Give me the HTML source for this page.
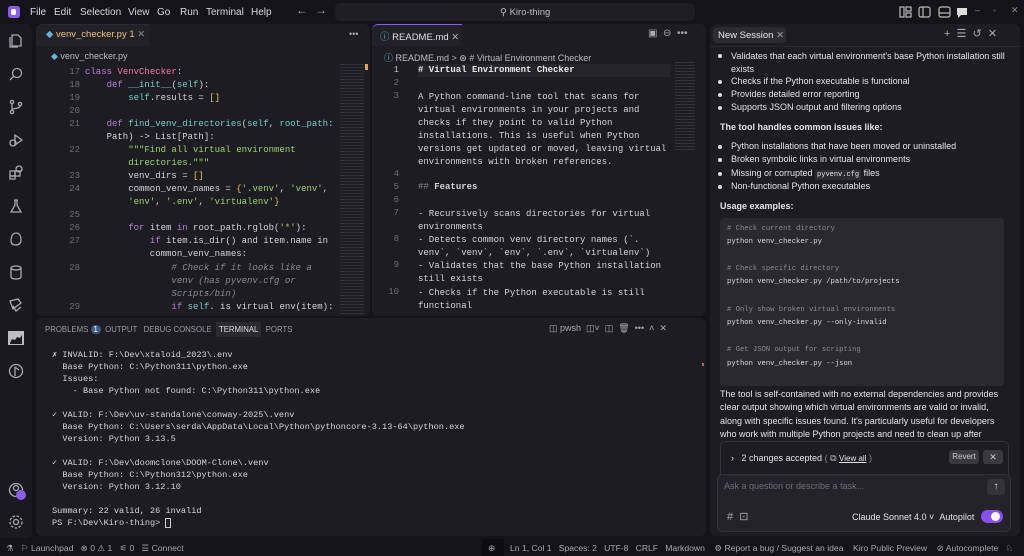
<!DOCTYPE html>
<html><head><meta charset="utf-8">
<style>
*{margin:0;padding:0;box-sizing:border-box}
body{width:1024px;height:556px;overflow:hidden;background:#141318;font-family:"Liberation Sans",sans-serif;color:#cfcfd4;position:relative}
.a{position:absolute}
.mono{font-family:"Liberation Mono","DejaVu Sans Mono",monospace}
.panel{position:absolute;background:#1d1c22;border-radius:6px}
.mi{position:absolute;top:7px;font-size:10px;color:#d8d8dc}
.ln{position:absolute;font-size:9px;color:#6c6c74;text-align:right;width:22px}
.cl{position:absolute;font-size:9px;white-space:pre;color:#d4d4d4}
.k{color:#b77fdc}.c{color:#f2769d}.f{color:#6fd0c6}.s{color:#9bd36b}.b{color:#e8c25a}.cm{color:#8a8a90;font-style:italic}.sf{color:#6fd0c6}
.t{position:absolute;font-size:8.6px;white-space:pre;color:#d6d6d6;left:52px}
.ch{position:absolute;font-size:9px;color:#e4e4e8;white-space:nowrap}
.bul{position:absolute;left:718px;width:4px;height:4px;border-radius:2px;background:#ddd}
.cb{position:absolute;left:727px;font-size:7.2px;white-space:pre}
.sb{position:absolute;top:543px;font-size:8.6px;color:#a8a8b0;white-space:nowrap}
.ic{position:absolute;stroke:#a9a9b2;fill:none;stroke-width:1.3}
</style></head><body>

<!-- title bar -->
<div class="a" style="left:8px;top:6px;width:12px;height:12px;border-radius:3px;background:#8a5cf0"></div>
<div class="a" style="left:11px;top:9px;width:5px;height:6px;border-radius:2px;background:#fff"></div>
<div class="mi" style="left:30px">File</div><div class="mi" style="left:54px">Edit</div><div class="mi" style="left:80px">Selection</div><div class="mi" style="left:128px">View</div><div class="mi" style="left:157px">Go</div><div class="mi" style="left:180px">Run</div><div class="mi" style="left:206px">Terminal</div><div class="mi" style="left:251px">Help</div>
<div class="a" style="left:296px;top:3px;font-size:12px;color:#aaa">←</div>
<div class="a" style="left:315px;top:3px;font-size:12px;color:#aaa">→</div>
<div class="a" style="left:335px;top:3px;width:360px;height:18px;background:#1f1e24;border-radius:5px"></div>
<div class="a" style="left:500px;top:7px;font-size:9.5px;color:#bbb">⚲ Kiro-thing</div>
<svg class="a" style="left:899px;top:5px" width="70" height="14" viewBox="0 0 70 14"><g stroke="#bbb" fill="none" stroke-width="1.2"><rect x="1" y="2" width="4" height="10"/><rect x="7" y="2" width="5" height="4"/><rect x="7" y="8" width="5" height="4"/><rect x="20" y="2" width="11" height="10" rx="2"/><line x1="24" y1="2" x2="24" y2="12"/><rect x="40" y="2" width="11" height="10" rx="2"/><line x1="40" y1="8" x2="51" y2="8"/></g><path d="M58 3h10v7h-6l-3 3v-3h-1z" fill="#ddd"/></svg>
<div class="a" style="left:975px;top:5px;font-size:9px;color:#888">–</div>
<div class="a" style="left:993px;top:6px;font-size:8px;color:#888">▫</div>
<div class="a" style="left:1011px;top:5px;font-size:9px;color:#888">✕</div>

<!-- activity bar -->
<div class="a" style="left:0;top:24px;width:32px;height:514px;background:#1a191e;border-radius:0 6px 6px 0"></div>
<svg class="ic" style="left:8px;top:32px" width="16" height="16"><path d="M4 3h6l3 3v8H4z M2 5v10h8"/></svg>
<svg class="ic" style="left:8px;top:66px" width="16" height="16"><circle cx="9" cy="7" r="4.5"/><path d="M6 10l-4 4"/></svg>
<svg class="ic" style="left:8px;top:99px" width="16" height="16"><circle cx="4" cy="3" r="1.6"/><circle cx="4" cy="13" r="1.6"/><circle cx="12" cy="5" r="1.6"/><path d="M4 5v6M12 7c0 3-8 2-8 4"/></svg>
<svg class="ic" style="left:8px;top:132px" width="16" height="16"><path d="M7 3l7 5-7 5z"/><circle cx="5" cy="11" r="3"/></svg>
<svg class="ic" style="left:8px;top:165px" width="16" height="16"><rect x="2" y="6" width="5" height="5"/><rect x="7" y="6" width="5" height="5"/><rect x="2" y="11" width="5" height="3"/><circle cx="11" cy="4" r="3"/></svg>
<svg class="ic" style="left:8px;top:198px" width="16" height="16"><path d="M6 2h4M7 2v5l-4 7h10l-4-7V2"/></svg>
<svg class="ic" style="left:8px;top:231px" width="16" height="16"><path d="M8 2c4 0 5 4 5 7s-2 5-5 5-5-1-5-4 1-8 5-8z"/></svg>
<svg class="ic" style="left:8px;top:264px" width="16" height="16"><ellipse cx="8" cy="4" rx="5" ry="2"/><path d="M3 4v9c0 1 2 2 5 2s5-1 5-2V4"/></svg>
<svg class="ic" style="left:8px;top:297px" width="16" height="16"><path d="M2 4l8-2 3 4-8 6zM5 9l3 5 5-4"/></svg>
<svg class="a" style="left:8px;top:331px" width="16" height="14"><rect width="16" height="14" fill="#bdbdc4"/><path d="M2 12l2-4 3 1 2-3 3 1 2-3v9H2z" fill="#1a191e"/></svg>
<svg class="ic" style="left:8px;top:363px" width="16" height="16"><circle cx="8" cy="8" r="6.5"/><path d="M7 4v9M7 4l4 3"/></svg>
<svg class="ic" style="left:8px;top:482px" width="16" height="16"><circle cx="8" cy="8" r="6.5"/><circle cx="8" cy="6" r="2.5"/></svg>
<div class="a" style="left:16px;top:490px;width:10px;height:10px;border-radius:5px;background:#8a5cf0"></div>
<svg class="ic" style="left:8px;top:514px" width="16" height="16"><circle cx="8" cy="8" r="2.5"/><circle cx="8" cy="8" r="6" stroke-dasharray="2.5 1.6"/></svg>

<!-- left editor -->
<div class="panel" style="left:36px;top:24px;width:334px;height:292px"></div>
<div class="a" style="left:36px;top:24px;width:113px;height:22px;background:#222127;border-radius:6px 0 0 0;border-top:1px solid #2a2930"></div>
<div class="a" style="left:46px;top:29px;font-size:9.5px;color:#e8c470"><span style="color:#5fb7d6">◆</span> venv_checker.py 1 <span style="color:#888">✕</span></div>
<div class="a" style="left:349px;top:29px;font-size:9px;color:#aaa">•••</div>
<div class="a" style="left:51px;top:51px;font-size:9px;color:#bbb"><span style="color:#5fb7d6">◆</span> venv_checker.py</div>
<div class="a" style="left:340px;top:64px;width:24px;height:250px;opacity:.35;background:repeating-linear-gradient(#555 0 1px,transparent 1px 3px)"></div>
<div class="a" style="left:365px;top:64px;width:3px;height:6px;background:#e8a23e"></div>

<div class="ln mono" style="left:58px;top:67px">17</div><div class="cl mono" style="left:85px;top:67px"><span class="k">class</span> <span class="c">VenvChecker</span>:</div>
<div class="ln mono" style="left:58px;top:80px">18</div><div class="cl mono" style="left:85px;top:80px">    <span class="k">def</span> <span class="f">__init__</span>(<span class="sf">self</span>):</div>
<div class="ln mono" style="left:58px;top:93px">19</div><div class="cl mono" style="left:85px;top:93px">        <span class="sf">self</span>.results = <span class="b">[]</span></div>
<div class="ln mono" style="left:58px;top:106px">20</div>
<div class="ln mono" style="left:58px;top:119px">21</div><div class="cl mono" style="left:85px;top:119px">    <span class="k">def</span> <span class="f">find_venv_directories</span>(<span class="sf">self</span>, <span class="f">root_path</span>:</div>
<div class="cl mono" style="left:85px;top:132px">    Path) -> List[Path]:</div>
<div class="ln mono" style="left:58px;top:145px">22</div><div class="cl mono s" style="left:85px;top:145px">        """Find all virtual environment</div>
<div class="cl mono s" style="left:85px;top:158px">        directories."""</div>
<div class="ln mono" style="left:58px;top:171px">23</div><div class="cl mono" style="left:85px;top:171px">        venv_dirs = <span class="b">[]</span></div>
<div class="ln mono" style="left:58px;top:184px">24</div><div class="cl mono" style="left:85px;top:184px">        common_venv_names = <span class="b">{</span><span class="s">'.venv'</span>, <span class="s">'venv'</span>,</div>
<div class="cl mono" style="left:85px;top:197px">        <span class="s">'env'</span>, <span class="s">'.env'</span>, <span class="s">'virtualenv'</span><span class="b">}</span></div>
<div class="ln mono" style="left:58px;top:210px">25</div>
<div class="ln mono" style="left:58px;top:223px">26</div><div class="cl mono" style="left:85px;top:223px">        <span class="k">for</span> item <span class="k">in</span> root_path.rglob(<span class="s">'*'</span>):</div>
<div class="ln mono" style="left:58px;top:236px">27</div><div class="cl mono" style="left:85px;top:236px">            <span class="k">if</span> item.is_dir() and item.name in</div>
<div class="cl mono" style="left:85px;top:249px">            common_venv_names:</div>
<div class="ln mono" style="left:58px;top:263px">28</div><div class="cl mono cm" style="left:85px;top:263px">                # Check if it looks like a</div>
<div class="cl mono cm" style="left:85px;top:276px">                venv (has pyvenv.cfg or</div>
<div class="cl mono cm" style="left:85px;top:289px">                Scripts/bin)</div>
<div class="ln mono" style="left:58px;top:302px">29</div><div class="cl mono" style="left:85px;top:302px">                <span class="k">if</span> <span class="sf">self</span>. is virtual env(item):</div>

<!-- right editor -->
<div class="panel" style="left:372px;top:24px;width:334px;height:292px"></div>
<div class="a" style="left:372px;top:24px;width:90px;height:22px;background:#222127;border-top:1px solid #8a5cf0;border-radius:6px 0 0 0"></div>
<div class="a" style="left:380px;top:29px;font-size:9.5px;color:#e0e0e4"><span style="color:#5fb7d6">ⓘ</span> README.md <span style="color:#aaa">✕</span></div>
<div class="a" style="left:648px;top:28px;font-size:10px;color:#aaa">▣ &nbsp;⊖ &nbsp;•••</div>
<div class="a" style="left:384px;top:51px;font-size:9px;color:#bbb"><span style="color:#5fb7d6">ⓘ</span> README.md &gt; <span style="color:#ccc">⊛</span> # Virtual Environment Checker</div>
<div class="a" style="left:418px;top:64px;width:252px;height:13px;background:#26252b"></div>
<div class="a" style="left:675px;top:62px;width:20px;height:90px;opacity:.3;background:repeating-linear-gradient(#666 0 1px,transparent 1px 3px)"></div>
<div class="ln mono" style="left:377px;top:65px;color:#bbb">1</div><div class="cl mono" style="left:418px;top:65px;font-weight:bold;color:#e8e8e8"># Virtual Environment Checker</div>
<div class="ln mono" style="left:377px;top:78px">2</div>
<div class="ln mono" style="left:377px;top:91px">3</div>
<div class="cl mono" style="left:418px;top:91px;line-height:13px">A Python command-line tool that scans for
virtual environments in your projects and
checks if they point to valid Python
installations. This is useful when Python
versions get updated or moved, leaving virtual
environments with broken references.</div>
<div class="ln mono" style="left:377px;top:169px">4</div>
<div class="ln mono" style="left:377px;top:182px">5</div><div class="cl mono" style="left:418px;top:182px"><span style="color:#888">##</span> <b>Features</b></div>
<div class="ln mono" style="left:377px;top:195px">6</div>
<div class="ln mono" style="left:377px;top:208px">7</div><div class="cl mono" style="left:418px;top:208px;line-height:13px">- Recursively scans directories for virtual
environments</div>
<div class="ln mono" style="left:377px;top:234px">8</div><div class="cl mono" style="left:418px;top:234px;line-height:13px">- Detects common venv directory names (`.
venv`, `venv`, `env`, `.env`, `virtualenv`)</div>
<div class="ln mono" style="left:377px;top:260px">9</div><div class="cl mono" style="left:418px;top:260px;line-height:13px">- Validates that the base Python installation
still exists</div>
<div class="ln mono" style="left:377px;top:287px">10</div><div class="cl mono" style="left:418px;top:287px;line-height:13px">- Checks if the Python executable is still
functional</div>

<!-- terminal -->
<div class="panel" style="left:36px;top:318px;width:670px;height:218px"></div>
<div class="a" style="left:45px;top:325px;font-size:7.8px;color:#9a9aa2;white-space:nowrap">PROBLEMS <span style="display:inline-block;background:#3a5a8a;color:#fff;border-radius:6px;padding:0 3px">1</span> &nbsp;OUTPUT &nbsp;&nbsp;DEBUG CONSOLE &nbsp;<span style="background:#2b2a31;color:#ddd;padding:3px 3px">TERMINAL</span> &nbsp;PORTS</div>
<div class="a" style="left:549px;top:323px;font-size:9px;color:#aaa;white-space:nowrap">◫ pwsh &nbsp;◫˅ &nbsp;◫ &nbsp;🗑 &nbsp;••• &nbsp;˄ &nbsp;✕</div>
<div class="t mono" style="top:349px;line-height:12px">✗ INVALID: F:\Dev\xtaloid_2023\.env
  Base Python: C:\Python311\python.exe
  Issues:
    - Base Python not found: C:\Python311\python.exe

✓ VALID: F:\Dev\uv-standalone\conway-2025\.venv
  Base Python: C:\Users\serda\AppData\Local\Python\pythoncore-3.13-64\python.exe
  Version: Python 3.13.5

✓ VALID: F:\Dev\doomclone\DOOM-Clone\.venv
  Base Python: C:\Python312\python.exe
  Version: Python 3.12.10

Summary: 22 valid, 26 invalid
PS F:\Dev\Kiro-thing&gt; <span style="border:1px solid #ccc;display:inline-block;width:6px;height:10px;vertical-align:middle"></span></div>
<div class="a" style="left:702px;top:363px;width:2px;height:3px;background:#e05050"></div>

<!-- chat -->
<div class="panel" style="left:710px;top:24px;width:310px;height:512px"></div>
<div class="a" style="left:713px;top:27px;width:73px;height:16px;background:#2c2b32;border-radius:4px"></div>
<div class="a" style="left:718px;top:30px;font-size:9.5px;color:#e6e6ea">New Session <span style="color:#999">✕</span></div>
<div class="a" style="left:944px;top:27px;font-size:11px;color:#aaa;white-space:nowrap">+ &nbsp;☰ &nbsp;↺ &nbsp;✕</div>
<div class="a" style="left:710px;top:46px;width:310px;height:1px;background:#2a2930"></div>

<div class="bul" style="top:54px"></div><div class="ch" style="left:731px;top:50px;line-height:13px;white-space:normal;width:280px">Validates that each virtual environment's base Python installation still exists</div>
<div class="bul" style="top:80px"></div><div class="ch" style="left:731px;top:76px">Checks if the Python executable is functional</div>
<div class="bul" style="top:93px"></div><div class="ch" style="left:731px;top:89px">Provides detailed error reporting</div>
<div class="bul" style="top:106px"></div><div class="ch" style="left:731px;top:102px">Supports JSON output and filtering options</div>
<div class="ch" style="left:720px;top:122px;font-weight:bold">The tool handles common issues like:</div>
<div class="bul" style="top:145px"></div><div class="ch" style="left:731px;top:141px">Python installations that have been moved or uninstalled</div>
<div class="bul" style="top:158px"></div><div class="ch" style="left:731px;top:154px">Broken symbolic links in virtual environments</div>
<div class="bul" style="top:172px"></div><div class="ch" style="left:731px;top:168px">Missing or corrupted <span class="mono" style="font-size:7px;background:#2c2b32;padding:1px 2px">pyvenv.cfg</span> files</div>
<div class="bul" style="top:185px"></div><div class="ch" style="left:731px;top:181px">Non-functional Python executables</div>
<div class="ch" style="left:720px;top:201px;font-weight:bold">Usage examples:</div>
<div class="a" style="left:720px;top:218px;width:284px;height:168px;background:#2a2930;border-radius:4px"></div>
<div class="cb mono" style="top:225px;color:#8a8a90">&#35; Check current directory</div>
<div class="cb mono" style="top:238px;color:#ddd">python venv_checker.py</div>
<div class="cb mono" style="top:265px;color:#8a8a90">&#35; Check specific directory</div>
<div class="cb mono" style="top:278px;color:#ddd">python venv_checker.py /path/to/projects</div>
<div class="cb mono" style="top:306px;color:#8a8a90">&#35; Only show broken virtual environments</div>
<div class="cb mono" style="top:319px;color:#ddd">python venv_checker.py --only-invalid</div>
<div class="cb mono" style="top:346px;color:#8a8a90">&#35; Get JSON output for scripting</div>
<div class="cb mono" style="top:360px;color:#ddd">python venv_checker.py --json</div>
<div class="ch" style="left:720px;top:388px;line-height:13.4px;white-space:normal;width:290px;height:54px;overflow:hidden">The tool is self-contained with no external dependencies and provides clear output showing which virtual environments are valid or invalid, along with specific issues found. It's particularly useful for developers who work with multiple Python projects and need to clean up after</div>

<div class="a" style="left:720px;top:441px;width:289px;height:40px;background:#1d1c22;border:1px solid #333239;border-radius:5px"></div>
<div class="ch" style="left:731px;top:453px;font-size:9px">›&nbsp;&nbsp; 2 changes accepted <span style="color:#888">(</span> <span style="color:#bbb">⧉</span> <span style="text-decoration:underline;font-size:8px">View all</span> <span style="color:#888">)</span></div>
<div class="a" style="left:949px;top:450px;width:30px;height:14px;background:#3a3940;border-radius:3px;font-size:8px;color:#ccc;text-align:center;line-height:14px">Revert</div>
<div class="a" style="left:983px;top:450px;width:20px;height:14px;background:#3a3940;border-radius:3px;font-size:9px;color:#ccc;text-align:center;line-height:14px">✕</div>
<div class="a" style="left:717px;top:474px;width:294px;height:58px;background:#24232a;border:1px solid #333239;border-radius:6px"></div>
<div class="ch" style="left:724px;top:481px;color:#6c6c74">Ask a question or describe a task...</div>
<div class="a" style="left:987px;top:479px;width:18px;height:16px;background:#34333a;border-radius:4px;font-size:10px;color:#ddd;text-align:center;line-height:16px">↑</div>
<div class="ch" style="left:727px;top:510px;font-size:11px;color:#aaa">#&nbsp; ⊡</div>
<div class="ch" style="left:852px;top:512px">Claude Sonnet 4.0 ˅ &nbsp;Autopilot</div>
<div class="a" style="left:981px;top:510px;width:22px;height:13px;border-radius:7px;background:#8a4ff0"></div>
<div class="a" style="left:991px;top:512px;width:9px;height:9px;border-radius:5px;background:#fff"></div>

<!-- status bar -->
<div class="sb" style="left:6px">⚗ &nbsp;&nbsp;⚐ Launchpad &nbsp;&nbsp;⊗ 0 ⚠ 1 &nbsp;&nbsp;⚟ 0 &nbsp;&nbsp;☰ Connect</div>
<div class="a" style="left:482px;top:539px;width:22px;height:17px;background:#0d0c10"></div>
<div class="sb" style="left:488px">⊕</div>
<div class="sb" style="left:510px">Ln 1, Col 1 &nbsp;&nbsp;Spaces: 2 &nbsp;&nbsp;UTF-8 &nbsp;&nbsp;CRLF &nbsp;&nbsp;Markdown &nbsp;&nbsp;&nbsp;⚙ Report a bug / Suggest an idea &nbsp;&nbsp;&nbsp;Kiro Public Preview &nbsp;&nbsp;&nbsp;⊘ Autocomplete &nbsp;&nbsp;♘</div>
</body></html>
